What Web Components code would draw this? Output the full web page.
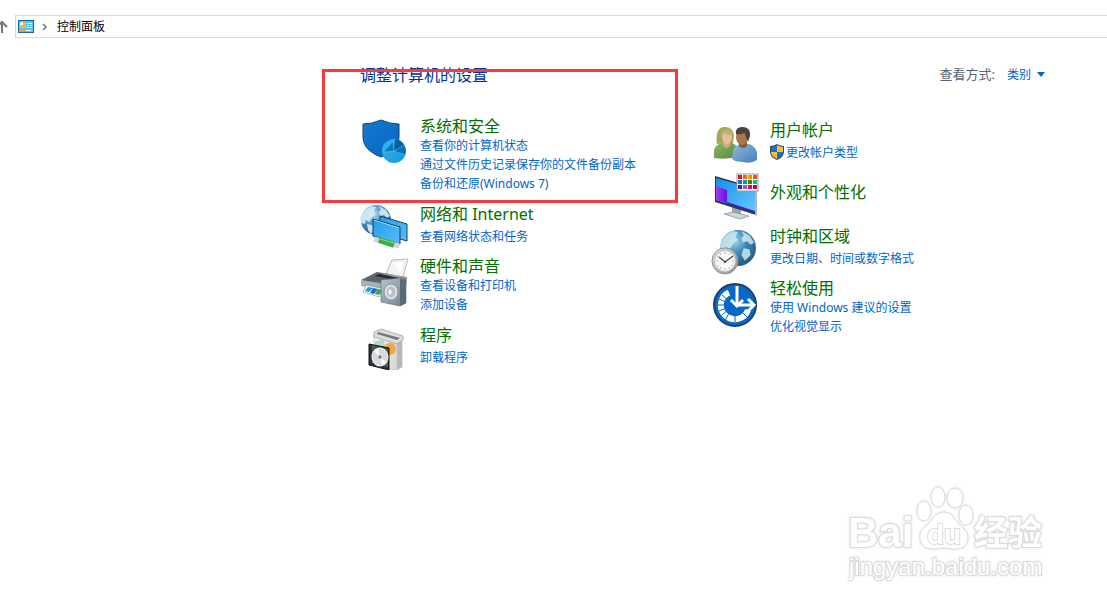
<!DOCTYPE html>
<html lang="zh-CN">
<head>
<meta charset="utf-8">
<title>控制面板</title>
<style>
    html, body {
        margin: 0;
        min-height: 100%;
        background: #fff;
    }

    body {
        font-family: "Noto Sans", "Noto Sans CJK SC", sans-serif;
        font-size: 12px;
        line-height: 19px;
        color: #000;
        overflow-x: hidden;
    }
</style>
</head>
<body>

<address-bar>控制面板</address-bar>

<control-panel heading="调整计算机的设置">
    <view-mode slot="view"></view-mode>

    <category-list slot="left">
        <category-item icon="security" label="系统和安全">
            <task-link>查看你的计算机状态</task-link>
            <task-link>通过文件历史记录保存你的文件备份副本</task-link>
            <task-link>备份和还原(Windows 7)</task-link>
        </category-item>
        <category-item icon="network" label="网络和 Internet" single>
            <task-link>查看网络状态和任务</task-link>
        </category-item>
        <category-item icon="hardware" label="硬件和声音">
            <task-link>查看设备和打印机</task-link>
            <task-link>添加设备</task-link>
        </category-item>
        <category-item icon="programs" label="程序" single>
            <task-link>卸载程序</task-link>
        </category-item>
    </category-list>

    <category-list slot="right">
        <category-item icon="users" label="用户帐户" single>
            <task-link shield>更改帐户类型</task-link>
        </category-item>
        <category-item icon="display" label="外观和个性化" compact></category-item>
        <category-item icon="clock" label="时钟和区域" single>
            <task-link>更改日期、时间或数字格式</task-link>
        </category-item>
        <category-item icon="access" label="轻松使用">
            <task-link>使用 Windows 建议的设置</task-link>
            <task-link>优化视觉显示</task-link>
        </category-item>
    </category-list>
</control-panel>

<site-watermark></site-watermark>

<script>
const GLOBE_LAND = `
    <path d="M-11 -10l6-4 5 1-2 4 2 3-4 3-3 5-3-2-1 4-4-1-1-6z"/>
    <path d="M3 -14l7 4 4 6-3 2-3-3-4 1-1-4 2-2z"/>
    <path d="M-9 4l5 1 3 4-4 5-3-4z"/>
    <path d="M5 1l5 1 1 5-5 5-3-5z"/>`;

const ICONS = {
    security: `
        <defs>
            <linearGradient id="s1" x1="0" y1="0" x2="1" y2="1"><stop offset="0" stop-color="#1479d2"/><stop offset="1" stop-color="#0666bd"/></linearGradient>
            <linearGradient id="s2" x1="0" y1="0" x2="1" y2="1"><stop offset="0" stop-color="#35b8ef"/><stop offset="1" stop-color="#1596d8"/></linearGradient>
        </defs>
        <path d="M3 7q9 0 18-4 9 4 18 4v13c0 9-7 16-18 20C10 36 3 29 3 20z" fill="url(#s1)" stroke="#124575"/>
        <circle cx="34" cy="34" r="12" fill="url(#s2)"/>
        <path d="M34 34L35 22A12 12 0 0 1 44 28z" fill="#075f9e"/>
        <path d="M34 34L44 28A12 12 0 0 1 45 38z" fill="#0871b9"/>
        <path d="M34 34L33 25 24 35z" fill="#0a74bd"/>
        <path d="M34 34L33 25M34 34L44 28M34 34L45 38M34 34L24 35" stroke="#5ed0f5" stroke-width=".5"/>`,

    network: `
        <defs>
            <radialGradient id="n1" cx=".4" cy=".3" r=".7"><stop offset="0" stop-color="#aee1f5"/><stop offset=".5" stop-color="#4c94c5"/><stop offset="1" stop-color="#245d91"/></radialGradient>
            <linearGradient id="n2" x1="0" y1="0" x2="1" y2="1"><stop offset="0" stop-color="#249deb"/><stop offset="1" stop-color="#57bdf7"/></linearGradient>
        </defs>
        <circle cx="16" cy="19" r="15" fill="url(#n1)"/>
        <g transform="translate(16 19)" fill="#d7edf5" opacity=".9">${GLOBE_LAND}</g>
        <path d="M20 15l27 8v17l-27-8z" fill="url(#n2)" stroke="#173e5c"/>
        <path d="M13 18l27 8v17l-27-8z" fill="url(#n2)" stroke="#173e5c"/>
        <path d="M14 19l25 8" stroke="#8fd6fa"/>
        <path d="M14 38l25 7" stroke="#d0d5d6" stroke-width="5"/>
        <path d="M19 39l15 5" stroke="#38af43" stroke-width="6"/>
        <path d="M20 38l14 4" stroke="#8be28b" stroke-width="1"/>`,

    hardware: `
        <defs>
            <linearGradient id="h1" x1="0" y1="0" x2="1" y2="1"><stop offset="0" stop-color="#303940"/><stop offset=".5" stop-color="#a1a9af"/><stop offset="1" stop-color="#4c555c"/></linearGradient>
            <linearGradient id="h2" x1="0" y1="0" x2="1" y2="1"><stop offset="0" stop-color="#bac5cd"/><stop offset="1" stop-color="#6e7e8b"/></linearGradient>
        </defs>
        <path d="M32 3l16-1-5 18-17-3z" fill="#f3f4f4" stroke="#a8acad" stroke-width=".8"/>
        <path d="M33 5l12-1-4 13" fill="#fff" stroke="#dfe1e2" stroke-width=".6"/>
        <path d="M1 23l16-8 30 5-1 9-15 4z" fill="url(#h1)"/>
        <path d="M2 23l17-6 20 4-12 6z" fill="#5a646c"/>
        <path d="M19 17l20 4-3 2-21-4z" fill="#232c32"/>
        <path d="M1 23l27 5v7L1 29z" fill="#a7b0b6"/>
        <path d="M6 28l19 4-6 8-16-5z" fill="#e8f3f7" stroke="#819097" stroke-width=".6"/>
        <path d="M8 30l5 1-4 4-4-1z" fill="#13a4c9"/>
        <path d="M13 31l5 1-4 5-4-1z" fill="#2668c4"/>
        <path d="M18 32l5 1-4 5-4-1z" fill="#36a84b"/>
        <path d="M21 23l19-2 6 2v23l-6 3-19-4z" fill="url(#h2)" stroke="#596872" stroke-width=".6"/>
        <path d="M40 22l6 1v23l-6 3z" fill="#596975"/>
        <ellipse cx="31" cy="35" rx="7" ry="8" fill="#d7dce0" stroke="#8c98a1"/>
        <ellipse cx="31" cy="35" rx="5" ry="6" fill="#b8c0c6" stroke="#f7f9fa" stroke-width=".6"/>
        <ellipse cx="30" cy="35" rx="2" ry="3" fill="#f8f9fa" stroke="#9aa5ac" stroke-width=".5"/>`,

    programs: `
        <defs><linearGradient id="p1"><stop offset="0" stop-color="#f8f8f8"/><stop offset="1" stop-color="#cecece"/></linearGradient></defs>
        <path d="M14 11l28 3v31l-6 3-22-5z" fill="url(#p1)" stroke="#b6b6b6" stroke-width=".7"/>
        <path d="M37 18l5-3v30l-5 3z" fill="#b8b8b8"/>
        <path d="M14 10l7-3 22 7v4l-6 4-23-7z" fill="#dcdcdc" stroke="#9b9b9b" stroke-width=".7"/>
        <path d="M18 10l22 6-3 2-20-6z" fill="#777"/>
        <path d="M15 19l8-1 3 7-11 3z" fill="#b6d7ca"/>
        <circle cx="30" cy="27" r="6" fill="#f5a53a"/>
        <path d="M9 22l20 4v22L9 43z" fill="#2e3338" stroke="#101317"/>
        <path d="M12 23l16 4v18l-16-4z" fill="#4d5962"/>
        <ellipse cx="20" cy="35" rx="8" ry="9" fill="#d7d9d9" stroke="#f4f4f4" transform="rotate(-10 20 35)"/>
        <path d="M20 35l-6-6 4-3zM20 35l6 5-4 3z" fill="#f8f9f7"/>
        <circle cx="20" cy="35" r="2.5" fill="#929d9e" stroke="#edf0ee"/>
        <circle cx="20" cy="35" r="1" fill="#6b767d"/>`,

    users: `
        <defs>
            <linearGradient id="u1" x1="0" y1="0" x2="1" y2="1"><stop offset="0" stop-color="#92b968"/><stop offset="1" stop-color="#56853c"/></linearGradient>
            <linearGradient id="u2" x1="0" y1="0" x2="1" y2="1"><stop offset="0" stop-color="#8fb9de"/><stop offset="1" stop-color="#487fb7"/></linearGradient>
        </defs>
        <path d="M7 27q-1-4 0-10Q9 9 15 10q8 0 9 9l-1 7z" fill="#a7a45d"/>
        <path d="M4 41V33q1-5 8-7h10q5 2 6 8l-2 6q-11 3-22 1z" fill="url(#u1)"/>
        <path d="M13 25v4q4 4 7 0v-4z" fill="#d8a680"/>
        <ellipse cx="17" cy="20" rx="5" ry="7" fill="#e9bd98"/>
        <path d="M10 21q1-10 9-9l4 5q-6 2-9-1-3 3-4 5z" fill="#b7b46e"/>
        <path d="M22 42l1-9q2-5 8-6h8q6 2 8 8v8q-6 4-14 2-8 0-11-3z" fill="url(#u2)"/>
        <path d="M29 25v4q4 4 8 0v-4z" fill="#81583c"/>
        <ellipse cx="32" cy="20" rx="6" ry="8" fill="#a9754d"/>
        <path d="M26 17q-1-7 6-7 9 0 8 9l-2 6-2-5-1-4q-6 2-9 1z" fill="#4b4239"/>`,

    display: `
        <defs>
            <linearGradient id="d1" x1="0" y1="0" x2="1" y2="1"><stop offset="0" stop-color="#168ee8"/><stop offset="1" stop-color="#65caff"/></linearGradient>
            <linearGradient id="d2"><stop offset="0" stop-color="#a63bf4"/><stop offset="1" stop-color="#6910db"/></linearGradient>
        </defs>
        <path d="M22 34l9 3v6h-9z" fill="#9ca6ad"/>
        <path d="M14 41l9-2 16 4-9 3z" fill="#d0d6d9" stroke="#7e8a91" stroke-width=".7"/>
        <path d="M5 3l41 12v27L5 29z" fill="#273d50"/>
        <path d="M6 5l39 11v23L6 27z" fill="url(#d1)"/>
        <path d="M6 13l11 4v13L6 27z" fill="url(#d2)"/>
        <path d="M17 29l28 9v2L17 31z" fill="#4d18bd"/>
        <path d="M45 15l2 1v27l-2-1z" fill="#aeb7bd"/>
        <rect x="27" y="1" width="21" height="17" fill="#fff" stroke="#999"/>
        <g transform="translate(28 2)">
            <path d="M0 0h4v4H0z" fill="#e81123"/><path d="M5 0h4v4H5z" fill="#f7630c"/><path d="M10 0h4v4h-4z" fill="#ff8c00"/><path d="M15 0h4v4h-4z" fill="#f04c21"/>
            <path d="M0 5h4v4H0z" fill="#0078d7"/><path d="M5 5h4v4H5z" fill="#0099bc"/><path d="M10 5h4v4h-4z" fill="#498205"/><path d="M15 5h4v4h-4z" fill="#00cc6a"/>
            <path d="M0 10h4v4H0z" fill="#4b16b4"/><path d="M5 10h4v4H5z" fill="#8764b8"/><path d="M10 10h4v4h-4z" fill="#e3008c"/><path d="M15 10h4v4h-4z" fill="#c30052"/>
        </g>`,

    clock: `
        <defs>
            <radialGradient id="c1" cx=".4" cy=".3" r=".7"><stop offset="0" stop-color="#9ed8ef"/><stop offset=".5" stop-color="#3d87b7"/><stop offset="1" stop-color="#255c89"/></radialGradient>
            <linearGradient id="c2" x1="0" y1="0" x2="1" y2="1"><stop offset="0" stop-color="#e7e9e9"/><stop offset="1" stop-color="#858c8e"/></linearGradient>
        </defs>
        <circle cx="28" cy="25" r="18" fill="url(#c1)"/>
        <g transform="translate(28 24) scale(1.15)" fill="#cfe8f1" opacity=".85">${GLOBE_LAND}</g>
        <circle cx="15" cy="38" r="13" fill="url(#c2)" stroke="#8d9599"/>
        <circle cx="15" cy="38" r="10.5" fill="#f7f8f7" stroke="#bfc3c5"/>
        <path d="M15 29v2M15 45v2M6 38h2M22 38h2M10 30l1 2M19 44l1 2M7 33l2 1M21 42l2 1M20 30l-1 2M10 46l1-2M7 43l2-1" stroke="#929a9d" stroke-width=".7"/>
        <path d="M9 34l6 5 8-6" fill="none" stroke="#3e454a" stroke-width="1.2"/>
        <circle cx="15" cy="39" r="1" fill="#333"/>`,

    access: `
        <circle cx="25" cy="26" r="21" fill="#0868c7" stroke="#17436e" stroke-width="2"/>
        <path d="M19 13.500A14 14 0 1 0 38 31" fill="none" stroke="#fff" stroke-width="6"/>
        <path d="M12 16l6 5M8 26h8M12 36l6-5M25 35v8M32 33l6 6M15 42l4-8M9 32l7-3M9 20l7 3" stroke="#0868c7" stroke-width="1"/>
        <g stroke="#0868c7" stroke-width="6"><path d="M26 8v18M30 25h13"/></g>
        <path d="M27 7v20" stroke="#fff" stroke-width="3"/>
        <path d="M21 21l6 6 6-6" fill="none" stroke="#fff" stroke-width="3"/>
        <path d="M25 26h18" stroke="#fff" stroke-width="3"/>
        <path d="M38 20l6 6-6 6" fill="none" stroke="#fff" stroke-width="3"/>`
};

class AddressBar extends HTMLElement {
    constructor() {
        super();
        this.attachShadow({ mode: "open" });

        this.shadowRoot.innerHTML = `
            <style>
                :host {
                    display: flex;
                    align-items: center;
                    padding-top: 15px;
                    color: #000;
                }

                button {
                    all: unset;
                    flex: none;
                    width: 15px;
                    height: 16px;
                }

                svg {
                    display: block;
                    flex: none;
                }

                nav {
                    flex: 1;
                    display: flex;
                    align-items: center;
                    box-sizing: border-box;
                    height: 23px;
                    padding-left: 2px;
                    border: 1px solid #d9d9d9;
                    border-right: 0;
                }

                .chevron {
                    margin: 0 9px 0 8px;
                }
            </style>

            <button aria-label="上移">
                <svg width="15" height="16" viewBox="0 0 15 16" fill="none" stroke="#777" stroke-width="2">
                    <path d="M2 14V3M-3 8l5-5 5 5"/>
                </svg>
            </button>
            <nav>
                <svg width="16" height="13" viewBox="0 0 16 13">
                    <path d="M0 0h16v13H0z" fill="#1268a5"/>
                    <path d="M1 1h14v11H1z" fill="#55c6f3"/>
                    <circle cx="5" cy="5" r="3" fill="#fff"/>
                    <path d="M5 5V2a3 3 0 1 1-3 3z" fill="#f6b21b"/>
                    <path d="M9 3.500h5M9 5.500h2M12 5.500h2M9 7.500h5" stroke="#dff5fd"/>
                    <path d="M2 10.500h6" stroke="#f4a72c"/>
                    <path d="M8 10.500h5" stroke="#fff"/>
                </svg>
                <svg class="chevron" width="6" height="8" viewBox="0 0 6 8" fill="none" stroke="#777" stroke-width="1.5">
                    <path d="M1 1l3 3-3 3"/>
                </svg>
                <slot></slot>
            </nav>
        `;
    }
}

class ControlPanel extends HTMLElement {
    constructor() {
        super();
        this.attachShadow({ mode: "open" });

        this.shadowRoot.innerHTML = `
            <style>
                :host {
                    display: block;
                    position: relative;
                    padding: 25px 62px 0 360px;
                }

                header {
                    display: flex;
                    justify-content: space-between;
                    margin-bottom: 30px;
                }

                h1 {
                    margin: 0;
                    font-size: 16px;
                    font-weight: normal;
                    line-height: 24px;
                    color: #003399;
                }

                main {
                    display: grid;
                    grid-template-columns: 350px 1fr;
                    align-items: start;
                }

                /* red box drawn over the first category */
                .marker {
                    position: absolute;
                    left: 322px;
                    top: 31px;
                    box-sizing: border-box;
                    width: 356px;
                    height: 134px;
                    border: 3px solid #fb3a3c;
                    pointer-events: none;
                }
            </style>

            <header>
                <h1></h1>
                <slot name="view"></slot>
            </header>
            <main>
                <slot name="left"></slot>
                <slot name="right"></slot>
            </main>
            <div class="marker"></div>
        `;
    }

    connectedCallback() {
        this.shadowRoot.querySelector("h1").textContent = this.getAttribute("heading");
    }
}

class ViewMode extends HTMLElement {
    constructor() {
        super();
        this.attachShadow({ mode: "open" });

        this.shadowRoot.innerHTML = `
            <style>
                :host {
                    display: flex;
                    align-items: center;
                    gap: 12px;
                    height: 22px;
                }

                label {
                    font-size: 13px;
                    color: #5a6475;
                }

                .field {
                    display: grid;
                    align-items: center;
                }

                select {
                    grid-area: 1 / 1;
                    appearance: none;
                    margin: 0;
                    padding: 0;
                    width: 38px;
                    border: 0;
                    background: none;
                    font: inherit;
                    color: #0066cc;
                }

                svg {
                    grid-area: 1 / 1;
                    justify-self: end;
                    pointer-events: none;
                }
            </style>

            <label for="mode">查看方式:</label>
            <span class="field">
                <select id="mode">
                    <option>类别</option>
                </select>
                <svg width="8" height="5" viewBox="0 0 8 5"><path d="M0 0h8L4 5z" fill="#0066cc"/></svg>
            </span>
        `;
    }
}

class CategoryList extends HTMLElement {
    constructor() {
        super();
        this.attachShadow({ mode: "open" });

        this.shadowRoot.innerHTML = `
            <style>
                :host {
                    display: flex;
                    flex-direction: column;
                    gap: 8px;
                }
            </style>
            <slot></slot>
        `;
    }
}

class CategoryItem extends HTMLElement {
    constructor() {
        super();
        this.attachShadow({ mode: "open" });

        this.shadowRoot.innerHTML = `
            <style>
                :host {
                    display: flex;
                    align-items: center;
                    gap: 12px;
                    box-sizing: border-box;
                    min-height: 48px;
                }

                /* category without tasks */
                :host([compact]) {
                    min-height: 0;
                    height: 42px;
                    padding-bottom: 4px;
                }

                svg {
                    flex: none;
                    align-self: flex-start;
                    width: 48px;
                    height: 48px;
                    overflow: visible;
                }

                .text {
                    display: flex;
                    flex-direction: column;
                    align-items: flex-start;
                }

                h2 {
                    margin: 0;
                    font-size: 16px;
                    font-weight: normal;
                    line-height: 19px;
                }

                :host([single]) h2 {
                    margin-bottom: 3px;
                }

                a {
                    color: #007000;
                    text-decoration: none;
                }

                a:hover {
                    text-decoration: underline;
                }
            </style>

            <svg viewBox="0 0 48 48" fill="none" aria-hidden="true"></svg>
            <div class="text">
                <h2><a href="#"></a></h2>
                <slot></slot>
            </div>
        `;
    }

    connectedCallback() {
        this.shadowRoot.querySelector("svg").innerHTML = ICONS[this.getAttribute("icon")];
        this.shadowRoot.querySelector("h2 a").textContent = this.getAttribute("label");
    }
}

class TaskLink extends HTMLElement {
    constructor() {
        super();
        this.attachShadow({ mode: "open" });

        this.shadowRoot.innerHTML = `
            <style>
                :host {
                    display: block;
                    height: 19px;
                }

                a {
                    display: flex;
                    align-items: center;
                    gap: 2px;
                    color: #0066cc;
                    text-decoration: none;
                    white-space: nowrap;
                }

                a:hover {
                    text-decoration: underline;
                }

                svg {
                    display: none;
                }

                :host([shield]) svg {
                    display: block;
                }
            </style>

            <a href="#">
                <svg width="14" height="16" viewBox="0 0 14 16">
                    <path d="M7 0q3 2 7 2v6q0 5-7 8Q0 13 0 8V2q4 0 7-2z" fill="#3b4650"/>
                    <path d="M7 1v7H1V3q3 0 6-2zM7 8h6q0 4-6 7z" fill="#1672cf"/>
                    <path d="M7 1q3 2 6 2v5H7zM7 8v7Q1 12 1 8z" fill="#fdc02f"/>
                </svg>
                <span><slot></slot></span>
            </a>
        `;
    }
}

class SiteWatermark extends HTMLElement {
    constructor() {
        super();
        this.attachShadow({ mode: "open" });

        this.shadowRoot.innerHTML = `
            <style>
                :host {
                    display: block;
                    position: fixed;
                    right: 59px;
                    bottom: 20px;
                    pointer-events: none;
                }

                svg {
                    display: block;
                    filter: drop-shadow(0 0 1px #ddd);
                }

                text {
                    font-family: "Liberation Sans", "Noto Sans CJK SC", sans-serif;
                    paint-order: stroke;
                }

                .name {
                    font-weight: bold;
                }
            </style>

            <svg width="200" height="100" viewBox="0 0 200 100" fill="#fff" stroke="#dcdcdc" stroke-width="2">
                <text class="name" x="0" y="62" font-size="42">Bai</text>
                <g stroke-width="1">
                    <ellipse cx="76" cy="26" rx="7" ry="10"/>
                    <ellipse cx="90" cy="12" rx="7" ry="10"/>
                    <ellipse cx="107" cy="13" rx="8" ry="10"/>
                    <ellipse cx="118" cy="30" rx="7" ry="10"/>
                    <path d="M96 27c-8 0-12 8-17 13-5 4-8 8-7 14 1 7 6 10 13 10 5 0 7-1 11-1s7 1 12 1c7 0 12-4 12-11 0-6-4-9-8-13-5-5-8-13-16-13z"/>
                </g>
                <text class="name" x="79" y="59" font-size="28">du</text>
                <text class="name" x="126" y="60" font-size="34">经验</text>
                <text x="1" y="90" font-size="24">jingyan.baidu.com</text>
            </svg>
        `;
    }
}

customElements.define("address-bar", AddressBar);
customElements.define("control-panel", ControlPanel);
customElements.define("view-mode", ViewMode);
customElements.define("category-list", CategoryList);
customElements.define("category-item", CategoryItem);
customElements.define("task-link", TaskLink);
customElements.define("site-watermark", SiteWatermark);
</script>
</body>
</html>
